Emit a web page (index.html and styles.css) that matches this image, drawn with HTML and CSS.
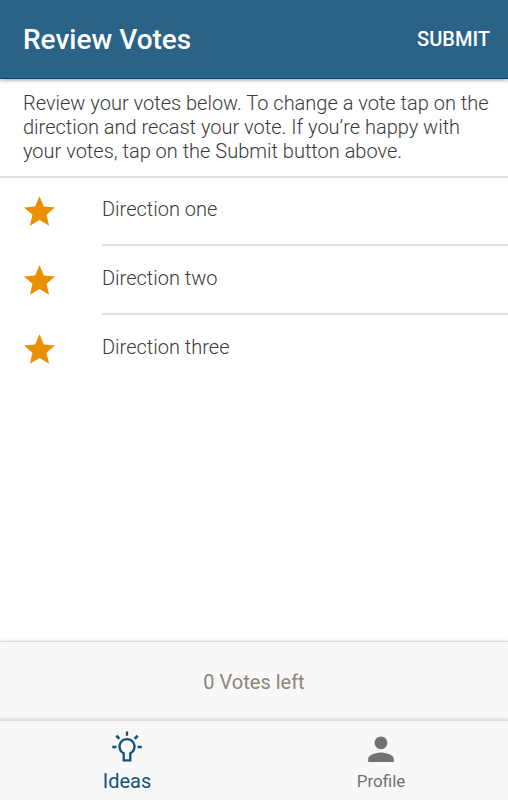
FILE: index.html
```html
<!DOCTYPE html>
<html lang="en">
<head>
<meta charset="utf-8">
<meta name="viewport" content="width=device-width, initial-scale=1">
<title>Review Votes</title>
<link rel="stylesheet" href="styles.css">
</head>
<body>
<header class="app-bar">
  <h1 class="title">Review Votes</h1>
  <button class="submit" type="button">SUBMIT</button>
</header>
<main class="content">
  <p class="intro">Review your votes below. To change a vote tap on the direction and recast your vote. If you’re happy with your votes, tap on the Submit button above.</p>
  <ul class="votes">
    <li class="vote">
      <svg class="star" viewBox="2 2 20 19" aria-hidden="true"><path d="M12 17.270L18.180 21l-1.640-7.030L22 9.240l-7.190-.61L12 2 9.190 8.630 2 9.240l5.460 4.730L5.820 21z"/></svg>
      <span class="vote-name">Direction one</span>
    </li>
    <li class="vote">
      <svg class="star" viewBox="2 2 20 19" aria-hidden="true"><path d="M12 17.270L18.180 21l-1.640-7.030L22 9.240l-7.190-.61L12 2 9.190 8.630 2 9.240l5.460 4.730L5.820 21z"/></svg>
      <span class="vote-name">Direction two</span>
    </li>
    <li class="vote">
      <svg class="star" viewBox="2 2 20 19" aria-hidden="true"><path d="M12 17.270L18.180 21l-1.640-7.030L22 9.240l-7.190-.61L12 2 9.190 8.630 2 9.240l5.460 4.730L5.820 21z"/></svg>
      <span class="vote-name">Direction three</span>
    </li>
  </ul>
</main>
<footer class="footer">
  <p class="votes-left">0 Votes left</p>
  <nav class="tabs">
    <a class="tab tab-active" href="#ideas" aria-current="page">
      <svg class="tab-icon" viewBox="0 0 32 32" aria-hidden="true">
        <g fill="none" stroke="currentColor" stroke-width="2.300">
          <path d="M12.700 22.300A7.500 7.500 0 1 1 19.300 22.300V29.300H12.700z"/>
          <path d="M16 0.400v4.400M1.200 16h4.300M26.500 16h4.300"/>
          <path d="M5.300 4.700l3 3M26.700 4.700l-3 3" stroke-width="2.700"/>
        </g>
      </svg>
      <span class="tab-label">Ideas</span>
    </a>
    <a class="tab" href="#profile">
      <svg class="tab-icon" viewBox="0 0 32 32" aria-hidden="true">
        <path transform="translate(-3.200 -1) scale(1.600)" d="M12 12c2.210 0 4-1.790 4-4s-1.790-4-4-4-4 1.790-4 4 1.790 4 4 4zm0 2c-2.670 0-8 1.340-8 4v2h16v-2c0-2.660-5.330-4-8-4z" fill="currentColor"/>
      </svg>
      <span class="tab-label">Profile</span>
    </a>
  </nav>
</footer>
</body>
</html>
```
FILE: styles.css
```css
* {
  box-sizing: border-box;
}

body {
  display: flex;
  flex-direction: column;
  min-height: 100vh;
  margin: 0;
  background: #fff;
  color: #3a3a3a;
  font: 350 20px/24px Roboto, sans-serif;
}

h1,
p,
ul {
  margin: 0;
  padding: 0;
}

.app-bar {
  display: flex;
  align-items: flex-start;
  justify-content: space-between;
  padding: 23px 18px 21px 23px;
  border-bottom: 1px solid #004a80;
  background: #2a6387;
  box-shadow: 0 1px 4px rgba(0, 0, 0, 0.4);
  color: #fff;
}

.title {
  font-size: 28px;
  font-weight: 500;
  line-height: 34px;
}

.submit {
  padding: 0;
  border: 0;
  background: none;
  color: inherit;
  font: 500 20px/32px Roboto, sans-serif;
}

.content {
  flex: 1;
}

.intro {
  padding: 12px 8px 13px 23px;
  border-bottom: 2px solid #e2e2e2;
}

.votes {
  display: flex;
  flex-direction: column;
  gap: 1px;
  list-style: none;
}

.vote {
  display: flex;
  padding-left: 24px;
}

.star {
  width: 31px;
  height: 30px;
  margin: 18px 47px 0 0;
  fill: #e98f00;
}

.vote-name {
  flex: 1;
  padding: 19px 0 23px;
  border-bottom: 2px solid #e0e0e0;
}

.vote:last-child .vote-name {
  border-bottom: 0;
}

.footer {
  background: #f8f8f8;
  font-weight: 400;
}

.votes-left {
  padding: 28px 0 26px;
  border-top: 1px solid #dcdcdc;
  box-shadow: 0 -1px 2px rgba(0, 0, 0, 0.08);
  color: #8f8478;
  text-align: center;
}

.tabs {
  display: flex;
  border-top: 1px solid #dcdcdc;
  box-shadow: 0 -1px 3px rgba(0, 0, 0, 0.14);
}

.tab {
  display: flex;
  flex: 1;
  flex-direction: column;
  align-items: center;
  gap: 6px;
  padding: 10px 0 7px;
  color: #727272;
  font-size: 17px;
  text-decoration: none;
}

.tab-active {
  color: #11537d;
  font-size: 20px;
}

.tab-icon {
  width: 32px;
  height: 32px;
}
```
